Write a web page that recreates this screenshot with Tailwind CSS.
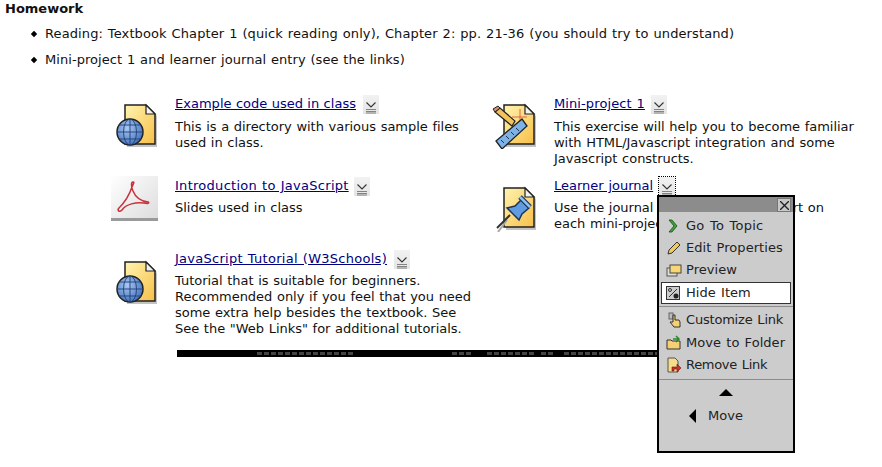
<!DOCTYPE html>
<html lang="en">
<head>
<meta charset="UTF-8" />
<title>Homework</title>
<script src="https://cdn.jsdelivr.net/npm/@tailwindcss/browser@4"></script>
</head>
<body class="bg-white text-[#111] font-['DejaVu_Sans',sans-serif] text-[13px] leading-[16px] overflow-hidden">
<svg width="0" height="0" class="absolute">
  <defs>
    <linearGradient id="docFill" x1="0" y1="0" x2="1" y2="1"><stop offset="0" stop-color="#fff4b0"/><stop offset="1" stop-color="#f7bf48"/></linearGradient>
    <linearGradient id="tile" x1="0" y1="0" x2="1" y2="1"><stop offset="0" stop-color="#ffffff"/><stop offset="1" stop-color="#dcdcdc"/></linearGradient>
    <linearGradient id="btn" x1="0" y1="0" x2="0" y2="1"><stop offset="0" stop-color="#f2f2f2"/><stop offset="1" stop-color="#e4e4e4"/></linearGradient>
    <radialGradient id="globe" cx="0.4" cy="0.35" r="0.7"><stop offset="0" stop-color="#a9c8f2"/><stop offset="1" stop-color="#3f6fb8"/></radialGradient>
    <symbol id="doc" viewBox="0 0 50 50">
      <path d="M17 8h21l9 9v31H17z" fill="#aaa" opacity="0.7"/>
      <path d="M15 6h21l9 9v30H15z" fill="url(#docFill)" stroke="#222" stroke-width="1.5"/>
      <path d="M36 6v9h9z" fill="#f3f3f3" stroke="#222" stroke-width="1.2"/>
    </symbol>
    <symbol id="menuBtn" viewBox="0 0 16 19">
      <rect width="16" height="19" fill="url(#btn)"/>
      <path d="M3.500 7.500l4.500 4.500 4.500-4.500" fill="none" stroke="#333" stroke-width="1.100"/>
      <path d="M3 14.500h10M3 16.500h10M3 18h10" stroke="#777" stroke-width="0.900"/>
    </symbol>
  </defs>
</svg>

<div class="relative w-[882px] h-[467px] pt-px">
  <h1 class="font-bold pl-[5px] leading-[16px]">Homework</h1>

  <ul class="mt-[9px] pl-[31px] flex flex-col gap-[10px] [word-spacing:0.6px]">
    <li class="flex items-center gap-[8px] tracking-[0.11px]"><span class="size-[6px] rotate-45 bg-black scale-75"></span>Reading: Textbook Chapter 1 (quick reading only), Chapter 2: pp. 21-36 (you should try to understand)</li>
    <li class="flex items-center gap-[8px] tracking-[0.06px]"><span class="size-[6px] rotate-45 bg-black scale-75"></span>Mini-project 1 and learner journal entry (see the links)</li>
  </ul>

  <div class="mt-[27px] ml-[110px] grid grid-cols-[379px_1fr] grid-rows-[82px_73px_auto] [word-spacing:0.6px] tracking-[-0.03px]">

    <div class="flex">
      <div class="w-[65px] shrink-0 pt-1">
        <svg width="50" height="50" viewBox="0 0 50 50">
          <use href="#doc" width="50" height="50"/>
          <circle cx="20" cy="33" r="13" fill="url(#globe)" stroke="#222" stroke-width="1.500"/>
          <path d="M7 33h26M9 26h22M9 40h22M20 20v26" stroke="#1f3f7a" fill="none" stroke-width="0.900"/>
          <ellipse cx="20" cy="33" rx="6.500" ry="13" fill="none" stroke="#1f3f7a" stroke-width="0.900"/>
        </svg>
      </div>
      <div>
        <div class="flex items-center h-[18px] gap-[7px]">
          <a href="#" class="text-[#000080] underline tracking-[0.02px] [word-spacing:0.2px]">Example code used in class</a>
          <svg width="16" height="19"><use href="#menuBtn" width="16" height="19"/></svg>
        </div>
        <p class="mt-[6px]">This is a directory with various sample files<br>used in class.</p>
      </div>
    </div>

    <div class="flex">
      <div class="w-[65px] shrink-0 pt-1">
        <svg width="50" height="50" viewBox="0 0 50 50">
          <use href="#doc" width="50" height="50"/>
          <path d="M31 10v13M23 18h15" stroke="#c33" stroke-width="0.800" opacity="0.850"/>
          <path d="M7 42L33 20l5 7-25 23z" fill="#7db2e8" stroke="#222" stroke-width="1.300"/>
          <path d="M12 41l3 3M17 37l3 3M22 33l3 3M27 29l3 3" stroke="#234" stroke-width="1"/>
          <path d="M6 13l5-4 15 13-3 5z" fill="#f2c35a" stroke="#222" stroke-width="1.200"/>
          <path d="M6 13l5-4-2-2-5 3z" fill="#e08a70" stroke="#222" stroke-width="1"/>
        </svg>
      </div>
      <div>
        <div class="flex items-center h-[18px] gap-[6px]">
          <a href="#" class="text-[#000080] underline tracking-[0.1px]">Mini-project 1</a>
          <svg width="16" height="19"><use href="#menuBtn" width="16" height="19"/></svg>
        </div>
        <p class="mt-[6px]">This exercise will help you to become familiar<br>with HTML/Javascript integration and some<br>Javascript constructs.</p>
      </div>
    </div>

    <div class="flex">
      <div class="w-[65px] shrink-0 -mt-px">
        <svg width="50" height="46" viewBox="0 0 50 46">
          <rect x="1" y="0" width="47" height="45" fill="url(#tile)"/>
          <rect x="1" y="42" width="47" height="3" fill="#9a9a9a"/>
          <path d="M23 6C21 6 21 10 23 15C25 20 29 25 38 26C40 27 38 28 34 27C26 26 16 28 12 34C9 37 7 34 9 32C13 28 19 20 22 11C23 8 25 6 23 6z" fill="none" stroke="#c8323c" stroke-width="1.500"/>
        </svg>
      </div>
      <div>
        <div class="flex items-center h-[18px] gap-[5px]">
          <a href="#" class="text-[#000080] underline tracking-[0.28px]">Introduction to JavaScript</a>
          <svg width="16" height="19"><use href="#menuBtn" width="16" height="19"/></svg>
        </div>
        <p class="mt-[5px]">Slides used in class</p>
      </div>
    </div>

    <div class="flex">
      <div class="w-[65px] shrink-0 pt-[5px]">
        <svg width="50" height="50" viewBox="0 0 50 50">
          <use href="#doc" width="50" height="50"/>
          <path d="M9 50l9-12" stroke="#aaa" stroke-width="2"/>
          <path d="M8 46l13-13" stroke="#333" stroke-width="2"/>
          <path d="M18 26l12 12 3-6 7-6-8-8-6 6z" fill="#5f9be0" stroke="#1d3357" stroke-width="1.500"/>
          <path d="M31 15l10 10" stroke="#1d3357" stroke-width="5"/>
          <path d="M31 15l10 10" stroke="#8fc0f2" stroke-width="2.500"/>
        </svg>
      </div>
      <div>
        <div class="flex items-center h-[18px] gap-[5px]">
          <a href="#" class="text-[#000080] underline tracking-[0px]">Learner journal</a>
          <span class="border border-dotted border-black"><svg width="16" height="19" class="block"><use href="#menuBtn" width="16" height="19"/></svg></span>
        </div>
        <p class="mt-[5px]">Use the journal to write a short report on<br>each mini-project.</p>
      </div>
    </div>

    <div class="flex">
      <div class="w-[65px] shrink-0 pt-[6px]">
        <svg width="50" height="50" viewBox="0 0 50 50">
          <use href="#doc" width="50" height="50"/>
          <circle cx="20" cy="33" r="13" fill="url(#globe)" stroke="#222" stroke-width="1.500"/>
          <path d="M7 33h26M9 26h22M9 40h22M20 20v26" stroke="#1f3f7a" fill="none" stroke-width="0.900"/>
          <ellipse cx="20" cy="33" rx="6.500" ry="13" fill="none" stroke="#1f3f7a" stroke-width="0.900"/>
        </svg>
      </div>
      <div>
        <div class="flex items-center h-[18px] gap-[7px]">
          <a href="#" class="text-[#000080] underline tracking-[0.27px]">JavaScript Tutorial (W3Schools)</a>
          <svg width="16" height="19"><use href="#menuBtn" width="16" height="19"/></svg>
        </div>
        <p class="mt-[5px]">Tutorial that is suitable for beginners.<br>Recommended only if you feel that you need<br>some extra help besides the textbook. See<br>See the "Web Links" for additional tutorials.</p>
      </div>
    </div>
  </div>

  <!-- thick rule with the dark dotted runs -->
  <div class="mt-[13px] ml-[177px] w-[482px] h-[7px] bg-black flex items-center">
    <span class="ml-[80px] w-[96px] h-[3px] bg-[repeating-linear-gradient(90deg,#444_0_5px,#000_5px_7px)]"></span>
    <span class="ml-[99px] w-[19px] h-[3px] bg-[repeating-linear-gradient(90deg,#444_0_5px,#000_5px_7px)]"></span>
    <span class="ml-[16px] w-[47px] h-[3px] bg-[repeating-linear-gradient(90deg,#444_0_5px,#000_5px_7px)]"></span>
    <span class="ml-[7px] w-[13px] h-[3px] bg-[repeating-linear-gradient(90deg,#444_0_5px,#000_5px_7px)]"></span>
    <span class="ml-[10px] w-[94px] h-[3px] bg-[repeating-linear-gradient(90deg,#444_0_5px,#000_5px_7px)]"></span>
  </div>

  <!-- context menu -->
  <div class="absolute left-[657px] top-[195px] w-[138px] h-[258px] border-2 border-black bg-[#cccccc] text-[#222] tracking-[0.05px] [word-spacing:1px] whitespace-nowrap">
    <div class="h-[15px] bg-[#8c8c8c] flex justify-end items-start pr-[2px] pt-px">
      <span class="size-[14px] bg-[#c8c8c8] border border-[#777] flex items-center justify-center">
        <svg width="9" height="9" viewBox="0 0 8 8"><path d="M0 0l8 8M8 0L0 8" stroke="#222" stroke-width="1.200"/></svg>
      </span>
    </div>
    <div class="pt-[3px] px-[3px]">
      <div class="flex items-center h-[22px] pl-[4px] gap-[4px] tracking-[0.25px]">
        <svg width="16" height="16" viewBox="0 0 16 16"><path d="M3 2h3l5 6-5 6H3l5-6z" fill="#3fa03f" stroke="#145214" stroke-width="0.800"/></svg>
        Go To Topic
      </div>
      <div class="flex items-center h-[22px] pl-[4px] gap-[4px]">
        <svg width="16" height="16" viewBox="0 0 16 16"><path d="M2 14l1-4 8-8 3 3-8 8z" fill="#f0c95a" stroke="#333" stroke-width="1"/></svg>
        Edit Properties
      </div>
      <div class="flex items-center h-[22px] pl-[4px] gap-[4px]">
        <svg width="16" height="16" viewBox="0 0 16 16"><rect x="1" y="6" width="10" height="8" fill="#ddd" stroke="#555"/><rect x="4" y="3" width="11" height="8" fill="#f7d774" stroke="#444"/></svg>
        Preview
      </div>
      <div class="flex items-center h-[22px] mt-px -mx-[1px] pl-[4px] gap-[6px] bg-white border border-[#333]">
        <svg width="14" height="14" viewBox="0 0 14 14"><rect x="0.500" y="0.500" width="13" height="13" fill="#ccc" stroke="#333"/><path d="M3 11l8-8" stroke="#333"/><circle cx="4" cy="4" r="1.500" fill="none" stroke="#333"/><circle cx="10" cy="10" r="2.500" fill="#222"/></svg>
        Hide Item
      </div>
    </div>
    <div class="mt-[2px] border-t border-[#8c8c8c] pt-[1px] px-[3px]">
      <div class="flex items-center h-[23px] pl-[4px] gap-[4px] tracking-[-0.2px]">
        <svg width="16" height="16" viewBox="0 0 16 16"><rect x="3" y="1" width="4" height="6" fill="#bbb" stroke="#666"/><path d="M7 3h2v5h4l1 2v5H8L4 10h3z" fill="#f5cf72" stroke="#333" stroke-width="1"/></svg>
        Customize Link
      </div>
      <div class="flex items-center h-[23px] pl-[4px] gap-[4px]">
        <svg width="16" height="16" viewBox="0 0 16 16"><path d="M1 5h4l1 1h8v8H1z" fill="#f5cf72" stroke="#333"/><path d="M7 4h5M10 1l3 3-3 3" fill="none" stroke="#2a8a2a" stroke-width="1.500"/></svg>
        Move to Folder
      </div>
      <div class="flex items-center h-[22px] pl-[4px] gap-[4px] tracking-[-0.3px]">
        <svg width="16" height="16" viewBox="0 0 16 16"><path d="M2 1h7l3 3v11H2z" fill="#f7dd8a" stroke="#555"/><path d="M6 14v-4h5V7l4 4-4 4v-3H8v2z" fill="#c8322a" stroke="#6d1410" stroke-width="0.600"/></svg>
        Remove Link
      </div>
    </div>
    <div class="mt-[3px] border-t border-[#8c8c8c] relative h-[70px]">
      <span class="absolute left-[60px] top-[9px] w-0 h-0 border-x-[7px] border-x-transparent border-b-[7px] border-b-black"></span>
      <span class="absolute left-[30px] top-[29px] w-0 h-0 border-y-[7px] border-y-transparent border-r-[7px] border-r-black"></span>
      <span class="absolute left-[49px] top-[28px]">Move</span>
    </div>
  </div>
</div>
</body>
</html>
